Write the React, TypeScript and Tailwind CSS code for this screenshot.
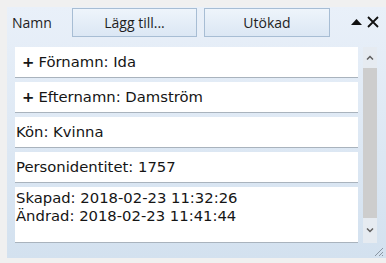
import React from 'react';

const rowFont = { fontFamily: '"DejaVu Sans", Tahoma, sans-serif' };

function Row({ children, plus, tall }: { children: React.ReactNode; plus?: boolean; tall?: boolean }) {
  return (
    <div
      className={
        'bg-white border-b border-[#a9b3bd] text-[14.8px] text-[#151515] ' +
        (tall ? 'h-[56px] pt-[2px] leading-[18px] pl-[1px]' : 'h-[31px] flex items-center pl-[1px]')
      }
      style={rowFont}
    >
      {plus && <span className="font-bold ml-[6px] mr-[4px]">+</span>}
      {children}
    </div>
  );
}

function App() {
  return (
    <div className="w-[386px] h-[263px] bg-[#f0f0f0] pt-[7px] pl-[7px] pb-[5px] overflow-hidden">
      <div className="h-full flex flex-col bg-gradient-to-b from-[#e9f0f9] to-[#d3e1ef]">
        {/* Header */}
        <div className="flex items-start pt-[1px] h-[40px]" style={{ fontFamily: '"Open Sans", "Noto Sans", sans-serif' }}>
          <div className="w-[65px] h-[29px] flex items-center pl-[5px] text-[14px] text-[#1e1e1e]">Namn</div>
          <button className="w-[125px] h-[29px] border border-[#a7bdd4] bg-gradient-to-b from-[#eef4fb] to-[#dbe7f4] text-[14px] text-[#1e1e1e]">
            Lägg till...
          </button>
          <button className="ml-[7px] w-[126px] h-[29px] border border-[#a7bdd4] bg-gradient-to-b from-[#eef4fb] to-[#dbe7f4] text-[14px] text-[#1e1e1e]">
            Utökad
          </button>
          <div className="flex items-center h-[29px] ml-[21px] gap-[5px] pb-[1px]">
            <svg width="11" height="6" viewBox="0 0 11 6">
              <path d="M0 6 L5.5 0 L11 6 Z" fill="#111" />
            </svg>
            <svg width="12" height="12" viewBox="0 0 12 12">
              <path d="M1 1 L11 11 M11 1 L1 11" stroke="#111" strokeWidth="1.8" />
            </svg>
          </div>
        </div>

        {/* Body */}
        <div className="flex h-[196px]">
          <div className="ml-[8px] w-[343px] flex flex-col gap-[4px]">
            <Row plus>Förnamn: Ida</Row>
            <Row plus>Efternamn: Damström</Row>
            <Row>Kön: Kvinna</Row>
            <Row>Personidentitet: 1757</Row>
            <Row tall>
              <div>Skapad: 2018-02-23 11:32:26</div>
              <div>Ändrad: 2018-02-23 11:41:44</div>
            </Row>
          </div>
          <div className="ml-[5px] w-[14px] h-full bg-[#e6ebf1] flex flex-col items-center">
            <div className="h-[21px] flex items-center justify-center">
              <svg width="8" height="5" viewBox="0 0 8 5">
                <path d="M1 4.5 L4 1.5 L7 4.5" stroke="#606060" strokeWidth="1.5" fill="none" />
              </svg>
            </div>
            <div className="w-full h-[150px] bg-[#cdcdcd]" />
            <div className="flex-1 flex items-center justify-center">
              <svg width="8" height="5" viewBox="0 0 8 5">
                <path d="M1 0.5 L4 3.5 L7 0.5" stroke="#606060" strokeWidth="1.5" fill="none" />
              </svg>
            </div>
          </div>
        </div>

        {/* Footer with grip */}
        <div className="flex-1 flex justify-end items-end pr-[2px] pb-[1px]">
          <svg width="11" height="11" viewBox="0 0 11 11">
            <path d="M10 2 L2 10 M10 6 L6 10 M10 9 L9 10" stroke="#8a96a3" strokeWidth="1" />
          </svg>
        </div>
      </div>
    </div>
  );
}

export default App;
